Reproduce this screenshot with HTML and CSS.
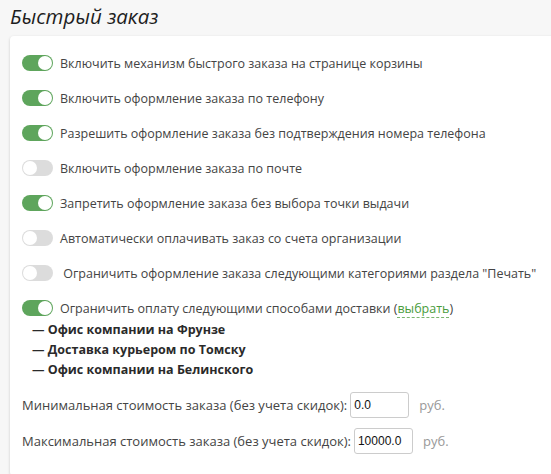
FILE: index.html
```html
<!DOCTYPE html>
<html lang="ru">
<head>
<meta charset="utf-8">
<link rel="stylesheet" href="styles.css">
</head>
<body>
<h1 class="title">Быстрый заказ</h1>
<div class="card">
  <div class="row"><span class="sw on"></span><span class="lbl">Включить механизм быстрого заказа на странице корзины</span></div>
  <div class="row"><span class="sw on"></span><span class="lbl">Включить оформление заказа по телефону</span></div>
  <div class="row"><span class="sw on"></span><span class="lbl">Разрешить оформление заказа без подтверждения номера телефона</span></div>
  <div class="row"><span class="sw"></span><span class="lbl">Включить оформление заказа по почте</span></div>
  <div class="row"><span class="sw on"></span><span class="lbl">Запретить оформление заказа без выбора точки выдачи</span></div>
  <div class="row"><span class="sw"></span><span class="lbl">Автоматически оплачивать заказ со счета организации</span></div>
  <div class="row"><span class="sw"></span><span class="lbl">&nbsp;Ограничить оформление заказа следующими категориями раздела "Печать"</span></div>
  <div class="row last"><span class="sw on"></span><span class="lbl">Ограничить оплату следующими способами доставки (<a class="pick">выбрать</a>)</span></div>
  <ul class="list">
    <li>— Офис компании на Фрунзе</li>
    <li>— Доставка курьером по Томску</li>
    <li>— Офис компании на Белинского</li>
  </ul>
  <div class="field"><span class="flbl">Минимальная стоимость заказа (без учета скидок):</span><input class="inp" value="0.0"><span class="unit">руб.</span></div>
  <div class="field"><span class="flbl">Максимальная стоимость заказа (без учета скидок):</span><input class="inp" value="10000.0"><span class="unit">руб.</span></div>
</div>
</body>
</html>
```
FILE: styles.css
```css
html, body {
  margin: 0;
  padding: 0;
  background: #f7f7f7;
  overflow: hidden;
}
body {
  font-family: "Open Sans", "Noto Sans", sans-serif;
  font-size: 12.5px;
  color: #444;
  padding: 0 0 0 10px;
}
.title {
  margin: 0;
  padding: 4px 0 0 0;
  height: 32px;
  font-size: 20.5px;
  font-weight: normal;
  font-style: italic;
  color: #1e1e1e;
  line-height: 24px;
}
.card {
  background: #fff;
  border-radius: 4px;
  box-shadow: 0 1px 3px rgba(0,0,0,0.18);
  margin-right: -20px;
  padding: 19px 0 12px 12px;
}
.row {
  display: flex;
  align-items: center;
  height: 16px;
  margin-bottom: 19px;
}
.row.last { margin-bottom: 4px; }
.sw {
  position: relative;
  width: 31px;
  height: 16px;
  border-radius: 8px;
  background: #dcdcdc;
  margin-right: 7px;
  flex: none;
}
.sw::after {
  content: "";
  position: absolute;
  top: 1px;
  left: 1px;
  width: 14px;
  height: 14px;
  border-radius: 50%;
  background: #fff;
}
.sw.on { background: #5ea55c; }
.sw.on::after {
  left: auto;
  right: 1px;
}
.lbl { white-space: nowrap; }
.pick {
  color: #4a9c3c;
  text-decoration: none;
  border-bottom: 1px dashed #7ab56e;
}
.list {
  list-style: none;
  margin: 0 0 12px 0;
  padding: 0 0 0 10px;
  font-weight: bold;
  color: #2a2a2a;
  line-height: 20px;
}
.field {
  display: flex;
  align-items: center;
  height: 26px;
  margin-bottom: 10px;
  font-size: 13px;
  color: #444;
}
.inp {
  box-sizing: border-box;
  width: 59px;
  height: 26px;
  margin: 0 10px 0 3px;
  border: 1px solid #ccc;
  border-radius: 3px;
  padding: 0 3px;
  font-family: "Liberation Sans", Arial, sans-serif;
  font-size: 12px;
  color: #111;
  background: #fff;
}
.unit { color: #999; }
```
